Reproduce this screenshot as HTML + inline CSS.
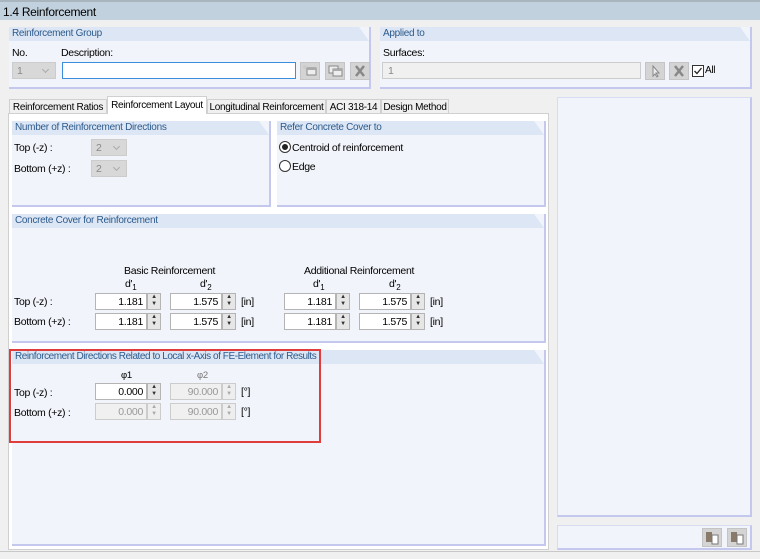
<!DOCTYPE html>
<html><head><meta charset="utf-8"><style>
*{box-sizing:border-box;margin:0;padding:0}
body{width:760px;height:559px;background:#f0f0f0;font-family:"Liberation Sans",sans-serif;font-size:10.5px;color:#000;position:relative;overflow:hidden;letter-spacing:-0.3px}
.a{position:absolute;white-space:nowrap}
.title{left:0;top:0;width:760px;height:20px;background:#c2d1de;border-top:2px solid #a8b4be;padding:3px 0 0 3px;font-size:12px}
.grp{position:absolute;background:#f1f4fa;border-right:2px solid #c4c8ee;border-bottom:2px solid #c4c8ee}
.grp .h{height:14px;background:#dce6f4;color:#2c5a8c;padding:1px 0 0 3px;font-size:10px;letter-spacing:-0.3px;white-space:nowrap;overflow:hidden;clip-path:polygon(0 0,calc(100% - 10px) 0,100% 100%,0 100%)}
.inp{position:absolute;background:#fff;border:1px solid #b4b4b4;height:17px;text-align:right;padding:2px 3px 0 0;font-size:10.5px}
.dis{background:#f0f0f0;color:#999;border-color:#ccc}
.spin{position:absolute;width:14px;height:17px;border:1px solid #b4b4b4;background:#e6e6e6;font-size:6px;line-height:7px;text-align:center;color:#333}
.sd{color:#aaa;border-color:#ccc;background:#eee}
.btn{position:absolute;width:20px;height:18px;background:#d4d4d4;border:1px solid #c4c4c4}
.tab{position:absolute;top:98px;height:16px;border:1px solid #d0d0d0;border-bottom:none;background:#f0f0f0;padding-top:2px;text-align:center;font-size:10px;letter-spacing:-0.3px;white-space:nowrap;overflow:hidden}
.combo{position:absolute;width:36px;height:17px;background:#d8d8d8;border:1px solid #ccc;color:#888;padding:2px 0 0 4px}
.combo:after{content:"";position:absolute;right:7px;top:4px;width:4px;height:4px;border-right:1px solid #aaa;border-bottom:1px solid #aaa;transform:rotate(45deg)}
</style></head><body>
<div class="a title">1.4 Reinforcement</div>

<div class="grp" style="left:9px;top:27px;width:362px;height:62px">
<div class="h">Reinforcement Group</div>
<div class="a" style="left:3px;top:20px">No.</div>
<div class="a" style="left:52px;top:20px">Description:</div>
</div>
<div class="combo" style="left:12px;top:62px;width:44px;height:17px">1</div>
<div class="a" style="left:62px;top:62px;width:234px;height:17px;background:#fff;border:1px solid #3c8edc"></div>
<div class="btn" style="left:300px;top:62px"><svg width="18" height="16"><rect x="6" y="5" width="9" height="7" fill="#eee" stroke="#888"/><rect x="6" y="5" width="9" height="2" fill="#aaa"/><circle cx="4" cy="4" r="2" fill="#ccc"/></svg></div>
<div class="btn" style="left:325px;top:62px"><svg width="18" height="16"><rect x="3" y="3" width="9" height="7" fill="#eee" stroke="#888"/><rect x="7" y="6" width="9" height="7" fill="#eee" stroke="#888"/><rect x="7" y="6" width="9" height="2" fill="#aaa"/></svg></div>
<div class="btn" style="left:350px;top:62px"><svg width="18" height="16"><path d="M5 3L13 13M13 3L5 13" stroke="#888" stroke-width="2.5"/></svg></div>

<div class="grp" style="left:380px;top:27px;width:372px;height:62px">
<div class="h">Applied to</div>
<div class="a" style="left:3px;top:20px">Surfaces:</div>
</div>
<div class="a" style="left:382px;top:62px;width:259px;height:17px;background:#f0f0f0;border:1px solid #ccc;color:#888;padding:2px 0 0 5px">1</div>
<div class="btn" style="left:645px;top:62px"><svg width="18" height="16"><path d="M7 3L7 13L9 11L11 14L12 13L10 10L13 10Z" fill="#eee" stroke="#888"/></svg></div>
<div class="btn" style="left:669px;top:62px"><svg width="18" height="16"><path d="M5 3L13 13M13 3L5 13" stroke="#888" stroke-width="2.5"/></svg></div>
<div class="a" style="left:692px;top:65px;width:12px;height:12px;border:1px solid #333;background:#fff"><svg width="10" height="10" style="position:absolute;left:0;top:0"><path d="M1.5 5L4 7.5L8.5 2" stroke="#222" fill="none" stroke-width="1.3"/></svg></div>
<div class="a" style="left:705px;top:65px;font-size:10px">All</div>

<div class="tab" style="left:9px;top:99px;width:98px">Reinforcement Ratios</div>
<div class="tab" style="left:107px;top:96px;width:100px;height:18px;background:#fff;z-index:2;padding-top:3px">Reinforcement Layout</div>
<div class="tab" style="left:207px;top:99px;width:119px">Longitudinal Reinforcement</div>
<div class="tab" style="left:326px;top:99px;width:55px">ACI 318-14</div>
<div class="tab" style="left:381px;top:99px;width:68px">Design Method</div>
<div class="a" style="left:8px;top:113px;width:541px;height:437px;background:#fff;border:1px solid #d0d0d0"></div>

<div class="grp" style="left:12px;top:121px;width:259px;height:86px"><div class="h">Number of Reinforcement Directions</div>
<div class="a" style="left:2px;top:21px">Top (-z) :</div>
<div class="a" style="left:2px;top:42px">Bottom (+z) :</div></div>
<div class="combo" style="left:91px;top:139px">2</div>
<div class="combo" style="left:91px;top:160px">2</div>

<div class="grp" style="left:277px;top:121px;width:269px;height:86px"><div class="h">Refer Concrete Cover to</div>
<div class="a" style="left:15px;top:21px">Centroid of reinforcement</div>
<div class="a" style="left:15px;top:40px">Edge</div></div>
<div class="a" style="left:279px;top:141px;width:12px;height:12px;border:1px solid #333;border-radius:50%;background:#fff"><div class="a" style="left:2px;top:2px;width:6px;height:6px;border-radius:50%;background:#222"></div></div>
<div class="a" style="left:279px;top:160px;width:12px;height:12px;border:1px solid #333;border-radius:50%;background:#fff"></div>

<div class="grp" style="left:12px;top:214px;width:534px;height:129px"><div class="h">Concrete Cover for Reinforcement</div>
<div class="a" style="left:112px;top:51px">Basic Reinforcement</div>
<div class="a" style="left:292px;top:51px">Additional Reinforcement</div>
<div class="a" style="left:113px;top:64px">d'<sub style="font-size:8px">1</sub></div>
<div class="a" style="left:188px;top:64px">d'<sub style="font-size:8px">2</sub></div>
<div class="a" style="left:301px;top:64px">d'<sub style="font-size:8px">1</sub></div>
<div class="a" style="left:377px;top:64px">d'<sub style="font-size:8px">2</sub></div>
<div class="a" style="left:2px;top:82px">Top (-z) :</div>
<div class="a" style="left:2px;top:102px">Bottom (+z) :</div>
</div>

<div class="grp" style="left:12px;top:350px;width:534px;height:196px"><div class="h" style="letter-spacing:-0.45px">Reinforcement Directions Related to Local x-Axis of FE-Element for Results</div>
<div class="a" style="left:109px;top:20px;font-size:9.5px">φ1</div>
<div class="a" style="left:185px;top:20px;font-size:9.5px;color:#777">φ2</div>
<div class="a" style="left:2px;top:37px">Top (-z) :</div>
<div class="a" style="left:2px;top:57px">Bottom (+z) :</div>
</div>
<div class="a" style="left:9px;top:349px;width:312px;height:94px;border:2px solid #e03c3c"></div>

<div class="inp" style="left:95px;top:293px;width:52px">1.181</div><div class="spin" style="left:147px;top:293px">▲<br>▼</div>
<div class="inp" style="left:170px;top:293px;width:52px">1.575</div><div class="spin" style="left:222px;top:293px">▲<br>▼</div>
<div class="a" style="left:241px;top:296px">[in]</div>
<div class="inp" style="left:284px;top:293px;width:52px">1.181</div><div class="spin" style="left:336px;top:293px">▲<br>▼</div>
<div class="inp" style="left:359px;top:293px;width:52px">1.575</div><div class="spin" style="left:411px;top:293px">▲<br>▼</div>
<div class="a" style="left:430px;top:296px">[in]</div>

<div class="inp" style="left:95px;top:313px;width:52px">1.181</div><div class="spin" style="left:147px;top:313px">▲<br>▼</div>
<div class="inp" style="left:170px;top:313px;width:52px">1.575</div><div class="spin" style="left:222px;top:313px">▲<br>▼</div>
<div class="a" style="left:241px;top:316px">[in]</div>
<div class="inp" style="left:284px;top:313px;width:52px">1.181</div><div class="spin" style="left:336px;top:313px">▲<br>▼</div>
<div class="inp" style="left:359px;top:313px;width:52px">1.575</div><div class="spin" style="left:411px;top:313px">▲<br>▼</div>
<div class="a" style="left:430px;top:316px">[in]</div>

<div class="inp" style="left:95px;top:383px;width:52px">0.000</div><div class="spin" style="left:147px;top:383px">▲<br>▼</div>
<div class="inp dis" style="left:170px;top:383px;width:52px">90.000</div><div class="spin sd" style="left:222px;top:383px">▲<br>▼</div>
<div class="a" style="left:241px;top:386px">[°]</div>
<div class="inp dis" style="left:95px;top:403px;width:52px">0.000</div><div class="spin sd" style="left:147px;top:403px">▲<br>▼</div>
<div class="inp dis" style="left:170px;top:403px;width:52px">90.000</div><div class="spin sd" style="left:222px;top:403px">▲<br>▼</div>
<div class="a" style="left:241px;top:406px">[°]</div>

<div class="a" style="left:557px;top:97px;width:195px;height:420px;background:#f1f4fa;border:1px solid #d8dcf0;border-right:2px solid #c4c8ee;border-bottom:2px solid #c4c8ee"></div>
<div class="a" style="left:557px;top:525px;width:195px;height:25px;background:#f1f4fa;border:1px solid #d8dcf0;border-right:2px solid #c4c8ee;border-bottom:2px solid #c4c8ee"></div>
<div class="btn" style="left:702px;top:528px;width:20px;height:19px"><svg width="18" height="17"><rect x="3" y="3" width="6" height="10" fill="#8a7a6a"/><rect x="9" y="6" width="6" height="9" fill="#fff" stroke="#777"/></svg></div>
<div class="btn" style="left:727px;top:528px;width:20px;height:19px"><svg width="18" height="17"><rect x="3" y="3" width="6" height="10" fill="#8a7a6a"/><rect x="9" y="6" width="6" height="9" fill="#fff" stroke="#777"/></svg></div>
<div class="a" style="left:0;top:551px;width:760px;height:8px;background:#f0f0f0;border-top:1px solid #c8c8c8"></div>
</body></html>
